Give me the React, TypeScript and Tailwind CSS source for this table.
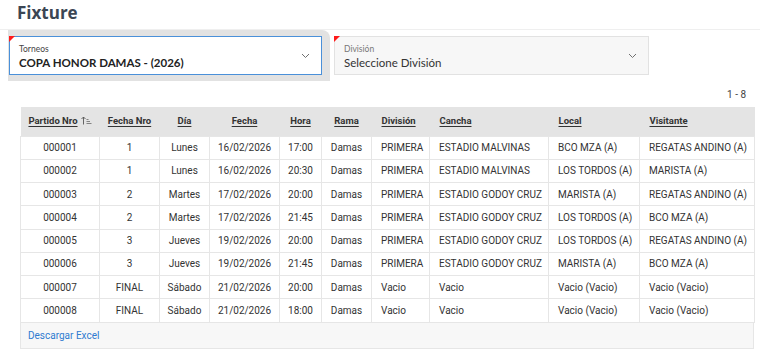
import React from 'react';

const cols = [
  { label: 'Partido Nro', w: 79, align: 'center' },
  { label: 'Fecha Nro', w: 60, align: 'center' },
  { label: 'Día', w: 50, align: 'center' },
  { label: 'Fecha', w: 70, align: 'center' },
  { label: 'Hora', w: 42, align: 'center' },
  { label: 'Rama', w: 50, align: 'center' },
  { label: 'División', w: 58, align: 'left' },
  { label: 'Cancha', w: 119, align: 'left' },
  { label: 'Local', w: 91, align: 'left' },
  { label: 'Visitante', w: 115, align: 'left' },
];

const rows = [
  ['000001', '1', 'Lunes', '16/02/2026', '17:00', 'Damas', 'PRIMERA', 'ESTADIO MALVINAS', 'BCO MZA (A)', 'REGATAS ANDINO (A)'],
  ['000002', '1', 'Lunes', '16/02/2026', '20:30', 'Damas', 'PRIMERA', 'ESTADIO MALVINAS', 'LOS TORDOS (A)', 'MARISTA (A)'],
  ['000003', '2', 'Martes', '17/02/2026', '20:00', 'Damas', 'PRIMERA', 'ESTADIO GODOY CRUZ', 'MARISTA (A)', 'REGATAS ANDINO (A)'],
  ['000004', '2', 'Martes', '17/02/2026', '21:45', 'Damas', 'PRIMERA', 'ESTADIO GODOY CRUZ', 'LOS TORDOS (A)', 'BCO MZA (A)'],
  ['000005', '3', 'Jueves', '19/02/2026', '20:00', 'Damas', 'PRIMERA', 'ESTADIO GODOY CRUZ', 'LOS TORDOS (A)', 'REGATAS ANDINO (A)'],
  ['000006', '3', 'Jueves', '19/02/2026', '21:45', 'Damas', 'PRIMERA', 'ESTADIO GODOY CRUZ', 'MARISTA (A)', 'BCO MZA (A)'],
  ['000007', 'FINAL', 'Sábado', '21/02/2026', '20:00', 'Damas', 'Vacio', 'Vacio', 'Vacio (Vacio)', 'Vacio (Vacio)'],
  ['000008', 'FINAL', 'Sábado', '21/02/2026', '18:00', 'Damas', 'Vacio', 'Vacio', 'Vacio (Vacio)', 'Vacio (Vacio)'],
];

function Chevron() {
  return (
    <svg width="9" height="6" viewBox="0 0 9 6" className="shrink-0">
      <path d="M1 1l3.5 3.5L8 1" fill="none" stroke="#707070" strokeWidth="1" />
    </svg>
  );
}

function SortIcon() {
  return (
    <svg width="11" height="9" viewBox="0 0 11 9" className="ml-[3px] inline-block align-[-1px]">
      <path d="M2.5 8.5V1M0.5 3L2.5 1l2 2" fill="none" stroke="#555" strokeWidth="0.9" />
      <path d="M5.5 3.5h2M5.5 5.5h3.5M5.5 7.5h5" fill="none" stroke="#777" strokeWidth="0.9" />
    </svg>
  );
}

function Field({ label, value, active }: { label: string; value: string; active?: boolean }) {
  return (
    <div
      className={`relative flex h-[39px] items-center justify-between pl-[9px] pr-[11px] font-['Lato',sans-serif] ${
        active ? 'w-[313px] border border-[#4a90d9] bg-white' : 'w-[315px] border border-[#e2e2e2] bg-[#f7f7f7]'
      }`}
    >
      <span className="absolute -left-px -top-px h-0 w-0 border-r-[6px] border-t-[6px] border-r-transparent border-t-[#ff1a1a]" />
      <div className="flex flex-col pt-[3px]">
        <span className={`text-[8.5px] leading-[11px] ${active ? 'text-[#444]' : 'text-[#777]'}`}>{label}</span>
        <span className={`text-[11.5px] leading-[16px] ${active ? 'font-bold text-[#222]' : 'text-[#333]'}`}>{value}</span>
      </div>
      <Chevron />
    </div>
  );
}

export default function App() {
  return (
    <div className="h-[353px] w-[760px] overflow-hidden bg-white font-['Open_Sans',sans-serif]">
      <h1 className="h-[29px] pl-[17px] pt-[1px] text-[17px] font-bold leading-[24px] text-[#3b4654]">Fixture</h1>

      <div className="flex items-start border-t border-[#efefef]">
        <div className="ml-[8px] rounded-tr-[8px] bg-[#e2e2e2] pb-[6px] pl-px pr-[8px] pt-[6px]">
          <Field label="Torneos" value="COPA HONOR DAMAS - (2026)" active />
        </div>
        <div className="ml-[4px] pt-[6px]">
          <Field label="División" value="Seleccione División" />
        </div>
      </div>

      <div className="flex h-[26px] items-center justify-end pr-[14px] font-['Roboto',sans-serif] text-[10px] text-[#444]">1 - 8</div>

      <div className="ml-[20px] w-[734px] font-['Roboto',sans-serif]">
        <table className="w-full table-fixed border-collapse text-[10px] text-[#333]">
          <colgroup>
            {cols.map((c) => (
              <col key={c.label} style={{ width: c.w }} />
            ))}
          </colgroup>
          <thead>
            <tr className="h-[29px] bg-[#e4e4e4]">
              {cols.map((c, i) => (
                <th
                  key={c.label}
                  className={`text-[9.5px] font-bold text-[#333] ${c.align === 'center' ? 'text-center' : 'pl-[10px] text-left'}`}
                >
                  <span className="underline underline-offset-2">{c.label}</span>
                  {i === 0 && <SortIcon />}
                </th>
              ))}
            </tr>
          </thead>
          <tbody>
            {rows.map((r) => (
              <tr key={r[0]} className="h-[23.25px]">
                {r.map((v, i) => (
                  <td
                    key={i}
                    className={`border border-[#e6e6e6] whitespace-nowrap ${cols[i].align === 'center' ? 'text-center' : 'pl-[9px] text-left'}`}
                  >
                    {v}
                  </td>
                ))}
              </tr>
            ))}
          </tbody>
        </table>
        <div className="flex h-[26px] items-center border border-t-0 border-[#e6e6e6] bg-[#f7f7f7] pl-[7px] text-[10px] text-[#2f7bd0]">
          Descargar Excel
        </div>
      </div>
    </div>
  );
}
